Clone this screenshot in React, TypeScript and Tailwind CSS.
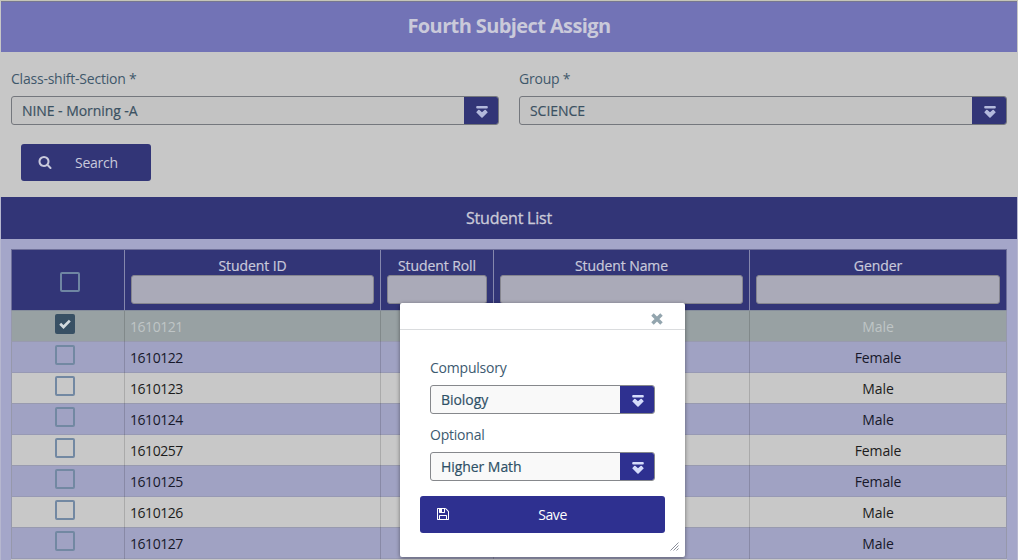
import type { ReactNode } from "react";

const students = [
  { id: "1610121", gender: "Male", selected: true },
  { id: "1610122", gender: "Female" },
  { id: "1610123", gender: "Male" },
  { id: "1610124", gender: "Male" },
  { id: "1610257", gender: "Female" },
  { id: "1610125", gender: "Female" },
  { id: "1610126", gender: "Male" },
  { id: "1610127", gender: "Male" },
];

function SearchIcon() {
  return (
    <svg viewBox="0 0 1792 1792" className="size-[14px] fill-current">
      <path d="M1216 832q0-185-131.5-316.5t-316.5-131.5-316.5 131.5-131.5 316.5 131.5 316.5 316.5 131.5 316.5-131.5 131.5-316.5zm512 832q0 52-38 90t-90 38q-54 0-90-38l-343-342q-179 124-399 124-143 0-273.5-55.5t-225-150-150-225-55.5-273.5 55.5-273.5 150-225 225-150 273.5-55.5 273.5 55.5 225 150 150 225 55.5 273.5q0 220-124 399l343 343q37 37 37 90z" />
    </svg>
  );
}

function SaveIcon() {
  return (
    <svg viewBox="0 0 1792 1792" className="size-[14px] fill-current">
      <path d="M512 1536h768v-384h-768v384zm896 0h128v-896q0-14-10-38.5t-20-34.5l-281-281q-10-10-34-20t-39-10v416q0 40-28 68t-68 28h-576q-40 0-68-28t-28-68v-416h-128v1280h128v-416q0-40 28-68t68-28h832q40 0 68 28t28 68v416zm-384-928v-320q0-13-9.5-22.5t-22.5-9.5h-192q-13 0-22.5 9.5t-9.5 22.5v320q0 13 9.5 22.5t22.5 9.5h192q13 0 22.5-9.5t9.5-22.5zm640 32v928q0 40-28 68t-68 28h-1344q-40 0-68-28t-28-68v-1344q0-40 28-68t68-28h928q40 0 88 20t76 48l280 280q28 28 48 76t20 88z" />
    </svg>
  );
}

function DropIcon() {
  return (
    <svg viewBox="0 0 12 12" className="size-3 fill-current">
      <rect x="0.2" y="0" width="11.6" height="2.6" rx="1" />
      <path d="M0.2 6.2L2.2 4Q2.9 3.5 3.5 4L6 6.3L8.5 4Q9.1 3.5 9.8 4L11.8 6.2L6.6 11.6Q6 12 5.4 11.6Z" />
    </svg>
  );
}

function Select({ value, dimmed }: { value: string; dimmed?: boolean }) {
  return (
    <div
      className={
        dimmed
          ? "flex h-[29px] items-stretch overflow-hidden rounded-[3px] border border-[#74777d] bg-[#c3c3c3] text-[#3b5162]"
          : "flex h-[29px] items-stretch overflow-hidden rounded-[3px] border border-[#86888c] bg-[#f9f9f9] text-[#2e5066]"
      }
    >
      <span className="flex-1 pl-[10px] text-[14px] leading-[27px] tracking-[-0.06px] [-webkit-text-stroke:0.18px_currentColor]">
        {value}
      </span>
      <span
        className={
          dimmed
            ? "flex w-[34px] items-center justify-center bg-[#323577] pt-[2px] pl-[2px] text-[#b3b9dc]"
            : "flex w-[34px] items-center justify-center bg-[#2e3090] pt-[2px] pl-[2px] text-[#d5dcfb]"
        }
      >
        <DropIcon />
      </span>
    </div>
  );
}

function Field({ label, children }: { label: string; children: ReactNode }) {
  return (
    <div className="flex flex-1 flex-col">
      <span className="mb-[7px] text-[14px] leading-5 tracking-[-0.22px]">{label}</span>
      {children}
    </div>
  );
}

function HeaderCell({ label }: { label: string }) {
  return (
    <div className="flex flex-col border-l border-[#8587ad] px-[6px] pt-[6px] text-center">
      <span className="h-[19px] text-[14px] leading-5 tracking-[-0.08px] whitespace-nowrap [-webkit-text-stroke:0.2px_currentColor]">
        {label}
      </span>
      <div className="h-[29px] rounded-[3px] border border-[#85858f] bg-[#aaaab8]" />
    </div>
  );
}

function rowClass(index: number, selected?: boolean) {
  if (selected) return "bg-[#98a1a3] text-[#bfc5c6] border-t-[#868e9c]";
  return index % 2
    ? "bg-[#a0a2c3] text-[#17182a] border-t-[#989aaf]"
    : "bg-[#c8c8c8] text-[#1c1c1c] border-t-[#9799b4]";
}

const columns = "grid grid-cols-[112px_256px_113px_256px_1fr]";

export default function App() {
  return (
    <div className="relative flex h-[560px] w-[1018px] flex-col overflow-hidden bg-[#c7c7c7] font-['Open_Sans',sans-serif] text-[14px]">
      <div className="h-px shrink-0 bg-[#c5c5b8]" />
      <header className="mx-px flex h-[51px] shrink-0 items-center justify-center border-t border-[#77778f] bg-[#7273b6] pb-[2px] text-[20px] font-bold tracking-[-0.6px] text-[#cacada]">
        Fourth Subject Assign
      </header>

      <section className="flex h-[145px] shrink-0 flex-col px-[11px] pt-[17px] text-[#3f586b]">
        <div className="flex gap-5">
          <Field label="Class-shift-Section *">
            <Select value="NINE - Morning -A" dimmed />
          </Field>
          <Field label="Group *">
            <Select value="SCIENCE" dimmed />
          </Field>
        </div>
        <button className="mt-[19px] ml-[10px] flex h-[37px] w-[130px] items-center rounded-[3px] bg-[#323577] pl-[17px] text-[#c9c9dc]">
          <span className="-mt-[2px]">
            <SearchIcon />
          </span>
          <span className="ml-[23px] tracking-[-0.25px]">Search</span>
        </button>
      </section>

      <section className="flex min-h-0 flex-1 flex-col border-x border-[#b6b7cf] bg-[#a4a6c9]">
        <h2 className="flex h-[42px] shrink-0 items-center justify-center bg-[#323577] text-[16px] tracking-[-0.2px] text-[#cacad8] [-webkit-text-stroke:0.3px_currentColor]">
          Student List
        </h2>
        <div className="mx-[10px] mt-[10px] shrink-0">
          <div className={`${columns} h-[61px] border border-b-0 border-[#6e709a] bg-[#323577] text-[#c9c9db]`}>
            <div className="flex justify-center pt-[22px] pl-1">
              <div className="size-5 rounded-[2px] border-2 border-[#6f86a3]" />
            </div>
            <HeaderCell label="Student ID" />
            <HeaderCell label="Student Roll" />
            <HeaderCell label="Student Name" />
            <HeaderCell label="Gender" />
          </div>
          {students.map((s, i) => (
            <div key={s.id} className={`${columns} h-[31px] border-x border-t border-x-[#9698ab] leading-[31px] ${rowClass(i, s.selected)}`}>
              <div className="flex justify-center pt-[3px] pr-[6px]">
                {s.selected ? (
                  <div className="flex size-5 items-center justify-center rounded-[2px] bg-[#385064] text-[#d3dade]">
                    <svg viewBox="0 0 12 12" className="size-3 fill-none stroke-current" strokeWidth="2.7">
                      <path d="M1.2 5.8L4.5 9L10.8 2.6" />
                    </svg>
                  </div>
                ) : (
                  <div className="size-5 rounded-[2px] border-2 border-[#7288a2]" />
                )}
              </div>
              <div className="border-l border-black/15 pl-[5px] tracking-[-0.45px]">{s.id}</div>
              <div className="border-l border-black/15" />
              <div className="border-l border-black/15" />
              <div className="border-l border-black/15 text-center tracking-[-0.1px]">{s.gender}</div>
            </div>
          ))}
          <div className="h-[31px] border-t border-[#9799b4] bg-[#c8c8c8]" />
        </div>
      </section>

      <div
        role="dialog"
        className="absolute top-[303px] left-[400px] flex h-[254px] w-[285px] flex-col rounded-[2px] bg-white text-[#3c5a70] shadow-[0_1px_4px_rgba(0,0,0,0.45)]"
      >
        <div className="flex h-[27px] shrink-0 justify-end border-b border-[#dadcde] pt-[10px] pr-[22px]">
          <svg viewBox="0 0 12 12" className="size-3 stroke-[#93a5ae]" strokeWidth="3.5">
            <path d="M1.5 1.5L10.5 10.5M10.5 1.5L1.5 10.5" />
          </svg>
        </div>
        <div className="flex flex-col gap-[11px] px-[30px] pt-[28px]">
          <Field label="Compulsory">
            <Select value="Biology" />
          </Field>
          <Field label="Optional">
            <Select value="Higher Math" />
          </Field>
        </div>
        <button className="mx-5 mt-[15px] flex h-[37px] shrink-0 items-center rounded-[3px] bg-[#2e3090] pl-[16px] text-white">
          <span className="-mt-[2px]">
            <SaveIcon />
          </span>
          <span className="flex-1 pr-[10px] text-center tracking-[-0.4px]">Save</span>
        </button>
        <svg viewBox="0 0 9 9" className="absolute right-[6px] bottom-[6px] size-[9px] stroke-[#8b8f9b]" strokeWidth="1">
          <path d="M0.5 8.5L8.5 0.5M3.5 8.5L8.5 3.5M6.5 8.5L8.5 6.5" />
        </svg>
      </div>
    </div>
  );
}
